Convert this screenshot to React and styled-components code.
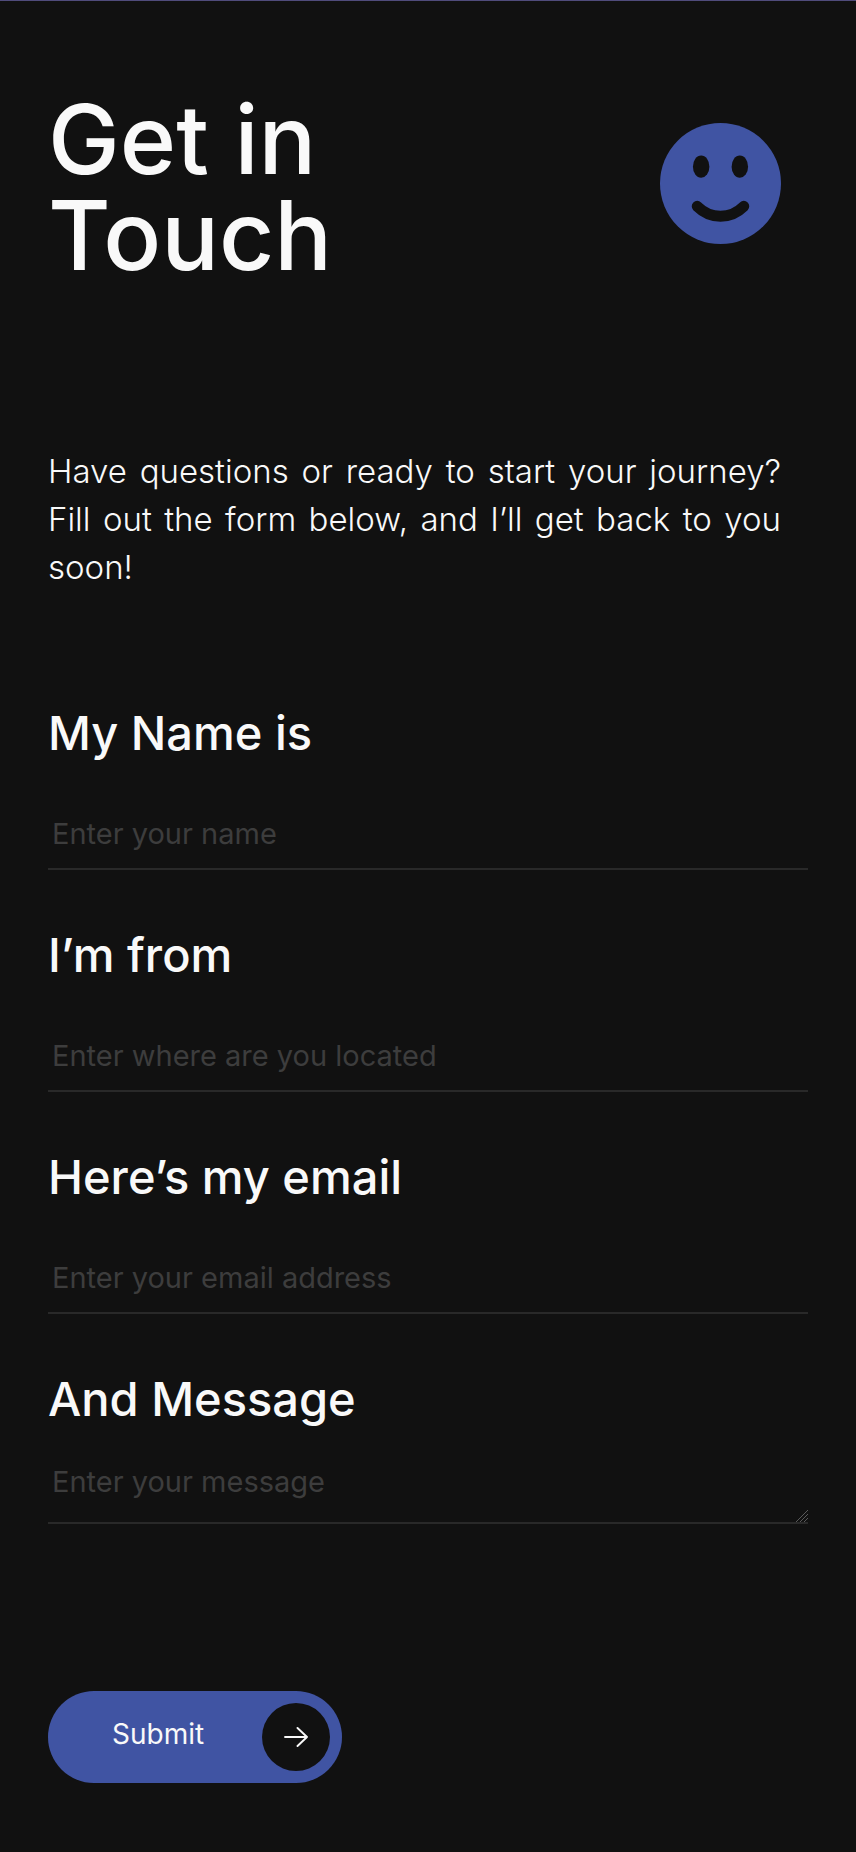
import React from 'react'
import styled, { createGlobalStyle, ThemeProvider } from 'styled-components'

const theme = {
  black: '#111111',
  white: '#f9f9f9',
  blue: '#4054a3',
  line: '#292929',
  placeholder: '#3d3d3d',
  topLine: '#504c7c'
}

const GlobalStyle = createGlobalStyle`
  *, *::before, *::after {
    box-sizing: border-box;
  }

  body {
    margin: 0;
    background: ${props => props.theme.black};
    color: ${props => props.theme.white};
    font-family: Inter, 'Open Sans', sans-serif;
  }

  input, textarea, button {
    font-family: inherit;
  }
`

const Page = styled.main`
  border-top: 1px solid ${props => props.theme.topLine};
  padding: 90px 48px 69px;
`

const Intro = styled.div`
  padding-right: 27px;
`

const Header = styled.header`
  display: flex;
  align-items: flex-start;
  justify-content: space-between;
`

const Title = styled.h1`
  margin: 0;
  font-size: 96px;
  font-weight: 500;
  line-height: 96px;
`

const Smiley = styled.svg`
  flex: none;
  width: 121px;
  height: 121px;
  margin-top: 32px;
`

const Lead = styled.p`
  margin: 164px 0 0;
  font-size: 33px;
  font-weight: 300;
  line-height: 48px;
  text-align: justify;
`

const Form = styled.form`
  display: flex;
  flex-direction: column;
  align-items: stretch;
  gap: 56px;
  margin-top: 112px;
`

const Field = styled.div`
  display: flex;
  flex-direction: column;
`

const Label = styled.label`
  font-size: 47px;
  font-weight: 500;
  line-height: 60px;
`

const Input = styled.input`
  width: 100%;
  height: 72px;
  margin-top: 35px;
  margin-bottom: -1px;
  padding: 0 4px;
  background: transparent;
  border: 0;
  border-bottom: 2px solid ${props => props.theme.line};
  border-radius: 0;
  color: ${props => props.theme.white};
  font-size: 29px;
  font-weight: 400;
  outline: none;

  &::placeholder {
    color: ${props => props.theme.placeholder};
    opacity: 1;
  }
`

const TextArea = styled(Input)`
  height: 78px;
  margin-top: 17px;
  padding: 18px 4px;
  line-height: 36px;
  overflow: hidden;
  resize: vertical;

  &::-webkit-resizer {
    background: linear-gradient(
        135deg,
        ${props => props.theme.black} 60%,
        transparent 60%
      ),
      repeating-linear-gradient(135deg, #5a5a5a 0 1px, #111111 1px 3px);
  }
`

const SubmitButton = styled.button`
  display: flex;
  align-items: center;
  align-self: flex-start;
  gap: 58px;
  margin-top: 112px;
  padding: 12px 12px 12px 64px;
  background: ${props => props.theme.blue};
  border: 0;
  border-radius: 46px;
  color: ${props => props.theme.white};
  font-size: 28px;
  line-height: 36px;
  cursor: pointer;
`

const SubmitText = styled.span`
  padding-bottom: 6px;
`

const ArrowCircle = styled.span`
  display: flex;
  align-items: center;
  justify-content: center;
  width: 68px;
  height: 68px;
  background: ${props => props.theme.black};
  border-radius: 50%;
`

const fields = [
  { id: 'name', label: 'My Name is', type: 'text', placeholder: 'Enter your name' },
  { id: 'location', label: 'I’m from', type: 'text', placeholder: 'Enter where are you located' },
  { id: 'email', label: 'Here’s my email', type: 'email', placeholder: 'Enter your email address' }
]

function App () {
  return (
    <ThemeProvider theme={theme}>
      <GlobalStyle />
      <Page>
        <Intro>
          <Header>
            <Title>
              Get in
              <br />
              Touch
            </Title>
            <Smiley viewBox='0 0 122 122' aria-hidden='true'>
              <circle cx='61' cy='61' r='61' fill={theme.blue} />
              <ellipse cx='41.5' cy='44' rx='8.3' ry='11.2' fill={theme.black} />
              <ellipse cx='80.5' cy='44' rx='8.3' ry='11.2' fill={theme.black} />
              <path
                d='M37.500 84Q47.500 94 61 94T84.500 84'
                fill='none'
                stroke={theme.black}
                strokeWidth='11'
                strokeLinecap='round'
              />
            </Smiley>
          </Header>
          <Lead>
            Have questions or ready to start your journey? Fill out the form
            below, and I’ll get back to you soon!
          </Lead>
        </Intro>

        <Form onSubmit={e => e.preventDefault()}>
          {fields.map(field => (
            <Field key={field.id}>
              <Label htmlFor={field.id}>{field.label}</Label>
              <Input
                id={field.id}
                name={field.id}
                type={field.type}
                placeholder={field.placeholder}
              />
            </Field>
          ))}
          <Field>
            <Label htmlFor='message'>And Message</Label>
            <TextArea
              as='textarea'
              id='message'
              name='message'
              placeholder='Enter your message'
            />
          </Field>
          <SubmitButton type='submit'>
            <SubmitText>Submit</SubmitText>
            <ArrowCircle>
              <svg width='24' height='20' viewBox='0 0 24 20' aria-hidden='true'>
                <path
                  d='M1 10H23M13.500 1L23 10L13.500 19'
                  fill='none'
                  stroke={theme.white}
                  strokeWidth='1.900'
                  strokeLinecap='round'
                  strokeLinejoin='round'
                />
              </svg>
            </ArrowCircle>
          </SubmitButton>
        </Form>
      </Page>
    </ThemeProvider>
  )
}

export default App
